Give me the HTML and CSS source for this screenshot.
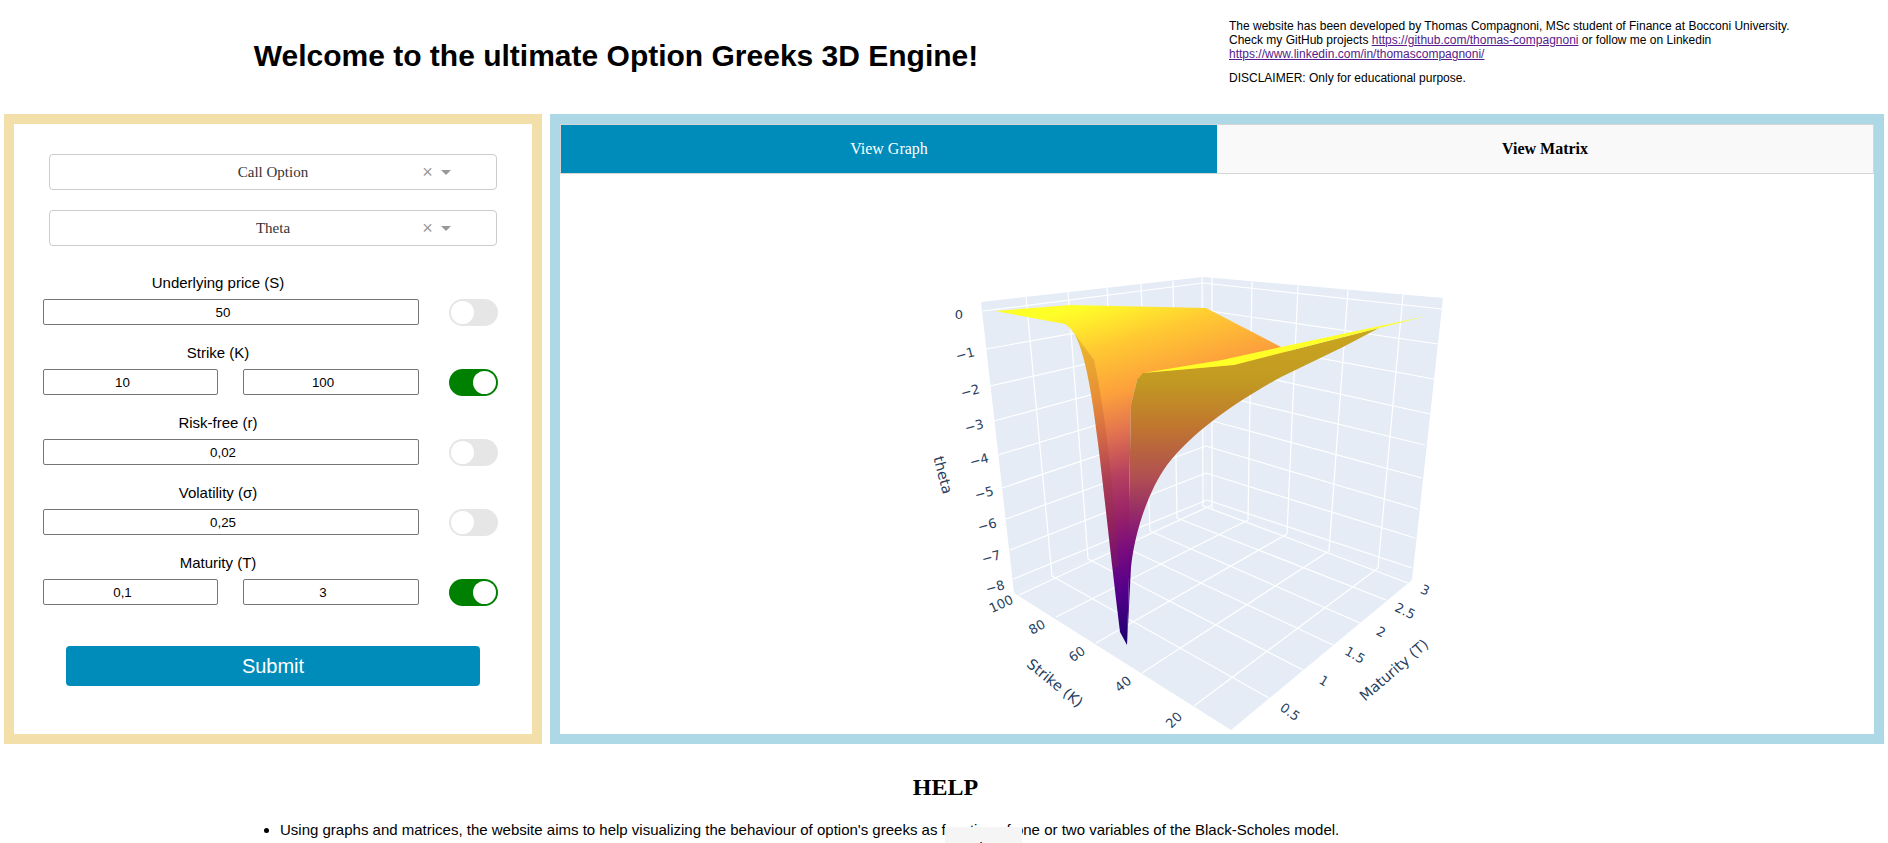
FILE: index.html
```html
<!DOCTYPE html>
<html>
<head>
  <meta charset="utf-8">
  <meta name="viewport" content="width=device-width, initial-scale=1">
  <title>Option Greeks 3D Engine</title>
  <link rel="stylesheet" href="styles.css">
</head>
<body>
  <header class="top">
    <div class="title"><h1>Welcome to the ultimate Option Greeks 3D Engine!</h1></div>
    <div class="info">
      <p>The website has been developed by Thomas Compagnoni, MSc student of Finance at Bocconi University.<br>
      Check my GitHub projects <a href="#">https://github.com/thomas-compagnoni</a> or follow me on Linkedin<br>
      <a href="#">https://www.linkedin.com/in/thomascompagnoni/</a></p>
      <p>DISCLAIMER: Only for educational purpose.</p>
    </div>
  </header>

  <main class="board">
    <section class="panel">
      <div class="dropdown">
        <span class="dropdown-value">Call Option</span>
        <span class="dropdown-icons"><span class="clear">&times;</span><span class="caret"></span></span>
      </div>
      <div class="dropdown">
        <span class="dropdown-value">Theta</span>
        <span class="dropdown-icons"><span class="clear">&times;</span><span class="caret"></span></span>
      </div>

      <div class="params">
        <div class="param">
          <label>Underlying price (S)</label>
          <div class="param-row">
            <div class="fields"><input type="text" value="50"></div>
            <span class="toggle"></span>
          </div>
        </div>
        <div class="param">
          <label>Strike (K)</label>
          <div class="param-row">
            <div class="fields"><input type="text" value="10"><input type="text" value="100"></div>
            <span class="toggle on"></span>
          </div>
        </div>
        <div class="param">
          <label>Risk-free (r)</label>
          <div class="param-row">
            <div class="fields"><input type="text" value="0,02"></div>
            <span class="toggle"></span>
          </div>
        </div>
        <div class="param">
          <label>Volatility (σ)</label>
          <div class="param-row">
            <div class="fields"><input type="text" value="0,25"></div>
            <span class="toggle"></span>
          </div>
        </div>
        <div class="param">
          <label>Maturity (T)</label>
          <div class="param-row">
            <div class="fields"><input type="text" value="0,1"><input type="text" value="3"></div>
            <span class="toggle on"></span>
          </div>
        </div>
      </div>

      <button class="submit" type="button">Submit</button>
    </section>

    <section class="viewer">
      <div class="tabs">
        <div class="tab selected">View Graph</div>
        <div class="tab">View Matrix</div>
      </div>
      <div class="plot">
        <!-- viewBox is in page pixels so the points read straight off the reference -->
        <svg class="scene" viewBox="561 174 1313 560" width="1313" height="560">
          <defs>
            <linearGradient id="backSheet" gradientUnits="userSpaceOnUse" x1="1100" y1="300" x2="1200" y2="633">
              <stop offset="0" stop-color="#ffff28"/>
              <stop offset="0.05" stop-color="#ffec2c"/>
              <stop offset="0.13" stop-color="#ffca32"/>
              <stop offset="0.27" stop-color="#fca03c"/>
              <stop offset="0.38" stop-color="#e2734f"/>
              <stop offset="0.5" stop-color="#b5405f"/>
              <stop offset="0.62" stop-color="#962068"/>
              <stop offset="0.72" stop-color="#760a80"/>
              <stop offset="0.82" stop-color="#54008a"/>
              <stop offset="0.97" stop-color="#1c006e"/>
            </linearGradient>
            <linearGradient id="frontSheet" gradientUnits="userSpaceOnUse" x1="1140" y1="330" x2="1140" y2="645">
              <stop offset="0" stop-color="#c9a61f"/>
              <stop offset="0.16" stop-color="#c29a22"/>
              <stop offset="0.3" stop-color="#c0782e"/>
              <stop offset="0.47" stop-color="#b04e52"/>
              <stop offset="0.62" stop-color="#8c2070"/>
              <stop offset="0.76" stop-color="#5e0082"/>
              <stop offset="0.88" stop-color="#3c0080"/>
              <stop offset="1" stop-color="#1a006e"/>
            </linearGradient>
          </defs>

          <polygon class="wall" points="982,302 1204,277 1208,507 1015,593"/>
          <polygon class="wall" points="1204,277 1444,298 1413,580 1208,507"/>
          <polygon class="wall" points="1015,593 1208,507 1413,580 1232,730"/>

          <g class="grid">
            <!-- z lines, left wall -->
            <path d="M984 311L1204 283M987 349L1204 310M991 386L1205 337M995 421L1205 364M999 455L1206 392M1003 488L1206 419M1007 519L1207 446M1011 550L1207 473M1014 579L1208 500"/>
            <!-- z lines, right wall -->
            <path d="M1204 283L1443 309M1204 310L1439 344M1205 337L1435 379M1205 364L1431 414M1206 392L1426 445M1206 419L1423 478M1207 446L1419 509M1207 473L1416 538M1208 500L1413 568"/>
            <!-- maturity lines up the left wall -->
            <path d="M1027 297L1053 576M1069 292L1089 559M1108 288L1121 545M1142 284L1151 531M1174 281L1178 518M1203 277L1204 506"/>
            <!-- strike lines up the right wall -->
            <path d="M1213 277L1213 509M1253 282L1249 520M1299 286L1288 534M1349 290L1330 551M1404 295L1379 568"/>
            <!-- floor -->
            <path d="M1020 595L1213 505M1057 617L1249 520M1097 643L1288 534M1143 673L1330 551M1195 706L1379 568"/>
            <path d="M1270 698L1053 576M1304 670L1089 559M1334 645L1121 545M1361 623L1151 531M1387 600L1178 518M1409 583L1204 506"/>
          </g>

          <!-- surface: back sheet, streak, front sheet, bright sliver -->
          <path fill="url(#backSheet)" d="M996 311L1072 305L1207 308L1282 347L1300 360L1180 400L1138 380L1132 405L1130 500L1130 577L1128 645L1121 632C1113 567 1106 500 1099 443C1093 393 1086 352 1075 333Q1072 328 1066 324Z"/>
          <path class="streak" d="M1075 333C1086 352 1093 393 1099 443C1106 500 1110 540 1113 567L1120 567C1115 500 1108 420 1095 360Z"/>
          <path fill="url(#frontSheet)" d="M1138 380L1144 373L1235 365L1380 328L1344 347L1282 377C1240 400 1195 430 1168 465C1150 490 1136 530 1132 567L1128 645L1130 577L1130 500L1132 405Z"/>
          <polygon fill="#ffff28" points="1144,373 1223,360 1282,347 1428,316 1380,328 1235,365"/>

          <g class="tick">
            <text transform="translate(960 314)">0</text>
            <text transform="translate(966 354) rotate(-15)">−1</text>
            <text transform="translate(971 391) rotate(-15)">−2</text>
            <text transform="translate(975 426) rotate(-15)">−3</text>
            <text transform="translate(980 460) rotate(-15)">−4</text>
            <text transform="translate(985 493) rotate(-15)">−5</text>
            <text transform="translate(988 525) rotate(-15)">−6</text>
            <text transform="translate(992 557) rotate(-15)">−7</text>
            <text transform="translate(996 587) rotate(-15)">−8</text>

            <text transform="translate(1002 604) rotate(-25)">100</text>
            <text transform="translate(1038 627) rotate(-30)">80</text>
            <text transform="translate(1078 654) rotate(-35)">60</text>
            <text transform="translate(1124 684) rotate(-40)">40</text>
            <text transform="translate(1175 720) rotate(-45)">20</text>

            <text transform="translate(1291 712) rotate(36)">0.5</text>
            <text transform="translate(1325 681) rotate(32)">1</text>
            <text transform="translate(1356 655) rotate(30)">1.5</text>
            <text transform="translate(1382 632) rotate(28)">2</text>
            <text transform="translate(1406 611) rotate(26)">2.5</text>
            <text transform="translate(1426 590) rotate(24)">3</text>
          </g>
          <g class="axis-title">
            <text transform="translate(944 475) rotate(75)">theta</text>
            <text transform="translate(1056 683) rotate(39)">Strike (K)</text>
            <text transform="translate(1395 670) rotate(-41)">Maturity (T)</text>
          </g>
        </svg>
      </div>
    </section>
  </main>

  <section class="help">
    <h2>HELP</h2>
    <ul>
      <li>Using graphs and matrices, the website aims to help visualizing the behaviour of option's greeks as function of one or two variables of the Black-Scholes model.</li>
    </ul>
    <div class="hint">Option</div>
  </section>
</body>
</html>
```

FILE: styles.css
```css
* {
  box-sizing: border-box;
}
html, body {
  margin: 0;
  height: 100%;
  overflow: hidden;
}
body {
  background: white;
  color: black;
  font-family: "Liberation Sans", Arial, sans-serif;
  position: relative;
}

.top {
  display: flex;
  height: 114px;
}
.title {
  width: 1229px;
  padding-left: 3px;
  text-align: center;
}
.title h1 {
  margin: 0;
  padding-top: 37px;
  font-size: 30px;
  line-height: 37px;
}
.info {
  padding-top: 19px;
  font-size: 12px;
  line-height: 14px;
}
.info p {
  margin: 0 0 10px;
}
.info a {
  color: #551a8b;
}

.board {
  display: flex;
  gap: 8px;
  height: 630px;
  padding: 0 4px;
}

.panel {
  width: 538px;
  border: 10px solid #f3dfa9;
  padding-top: 30px;
  display: flex;
  flex-direction: column;
}
.dropdown {
  display: flex;
  align-items: center;
  height: 36px;
  margin: 0 35px 20px;
  padding-left: 77px;
  border: 1px solid #ccc;
  border-radius: 4px;
  font-family: "Liberation Serif", "Times New Roman", serif;
  font-size: 15px;
  color: #333;
}
.dropdown-value {
  flex: 1;
  padding-top: 1px;
  text-align: center;
}
.dropdown-icons {
  display: flex;
  align-items: center;
  width: 77px;
}
.clear {
  width: 17px;
  text-align: center;
  font-family: "Liberation Sans", sans-serif;
  font-size: 18px;
  color: #999;
}
.caret {
  margin-left: 5px;
  border-style: solid;
  border-width: 5px 5px 0;
  border-color: #999 transparent transparent;
}

.params {
  margin: 8px 0 0 29px;
}
.param {
  height: 70px;
}
.param label {
  display: block;
  width: 350px;
  height: 25px;
  font-size: 15px;
  line-height: 18px;
  text-align: center;
}
.param-row {
  display: flex;
  align-items: flex-start;
}
.fields {
  display: flex;
  gap: 25px;
  width: 376px;
  margin-right: 30px;
}
.fields input {
  flex: 1;
  min-width: 0;
  height: 26px;
  padding: 0 18px 0 2px;
  border: 1px solid #767676;
  border-radius: 2px;
  font-family: "Liberation Sans", Arial, sans-serif;
  font-size: 13.33px;
  text-align: center;
  color: black;
  background: white;
}
.fields input:first-child:not(:last-child) {
  flex: 0 0 175px;
}
.toggle {
  position: relative;
  width: 49px;
  height: 27px;
  border-radius: 14px;
  background: #e6e6e6;
}
.toggle::after {
  content: '';
  position: absolute;
  top: 2px;
  left: 2px;
  width: 23px;
  height: 23px;
  border-radius: 50%;
  background: white;
}
.toggle.on {
  background: green;
}
.toggle.on::after {
  left: 24px;
}

.submit {
  width: 414px;
  height: 40px;
  margin: 22px 0 0 52px;
  border: none;
  border-radius: 4px;
  background: #008cba;
  color: white;
  font-family: "Liberation Sans", Arial, sans-serif;
  font-size: 20px;
}

.viewer {
  width: 1334px;
  border: 10px solid #add8e6;
  background: white;
  display: flex;
  flex-direction: column;
}
.tabs {
  display: flex;
  height: 50px;
  border: 1px solid #d6d6d6;
  font-family: "Liberation Serif", "Times New Roman", serif;
  font-size: 16px;
}
.tab {
  flex: 1;
  display: flex;
  align-items: center;
  justify-content: center;
  background: #f9f9f9;
  font-weight: bold;
}
.tab.selected {
  background: #008cba;
  color: white;
  font-weight: normal;
}
.plot {
  flex: 1;
}
.scene {
  display: block;
}
.wall {
  fill: #e5ecf6;
}
.grid path {
  fill: none;
  stroke: white;
  stroke-width: 1.2;
}
.streak {
  fill: #8a3a20;
  opacity: 0.18;
}
.tick text, .axis-title text {
  font-family: "DejaVu Sans", Verdana, sans-serif;
  fill: #2a3f5f;
  text-anchor: middle;
  dominant-baseline: central;
}
.tick text {
  font-size: 13px;
}
.axis-title text {
  font-size: 14.5px;
}

.help {
  height: 99px;
}
.help h2 {
  margin: 0;
  padding: 30px 0 0 3px;
  font-family: "Liberation Serif", "Times New Roman", serif;
  font-size: 24px;
  line-height: 27px;
  text-align: center;
}
.help ul {
  margin: 0;
  padding: 21px 0 0 280px;
  font-size: 15px;
  line-height: 16px;
}
.hint {
  position: absolute;
  left: 945px;
  top: 827px;
  width: 77px;
  height: 30px;
  padding: 13px 0 0 12px;
  background: #f5f5f5;
  font-size: 14px;
}
```
